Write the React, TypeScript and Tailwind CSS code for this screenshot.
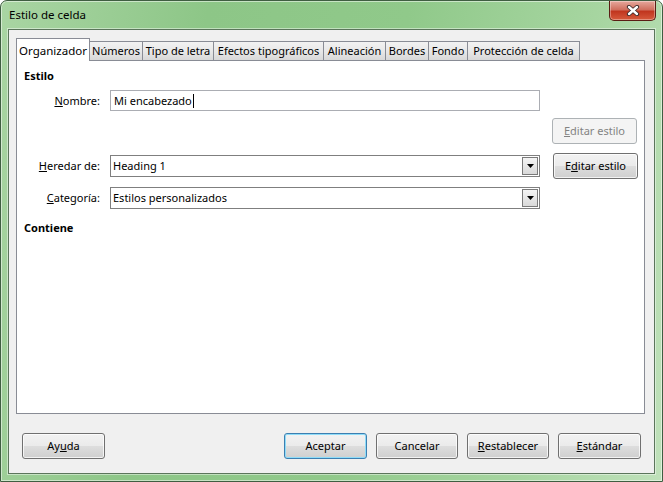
import React from "react";

const tabs = [
  { label: "Organizador", w: "w-[74px]" },
  { label: "Números", w: "w-[53px]" },
  { label: "Tipo de letra", w: "w-[71px]" },
  { label: "Efectos tipográficos", w: "w-[110px]" },
  { label: "Alineación", w: "w-[62px]" },
  { label: "Bordes", w: "w-[43px]" },
  { label: "Fondo", w: "w-[39px]" },
  { label: "Protección de celda", w: "w-[112px]" },
];

const btnFace =
  "bg-[linear-gradient(to_bottom,#f2f2f2_0%,#ebebeb_48%,#dddddd_52%,#cfcfcf_100%)]";

function Button({
  children,
  className = "",
  primary = false,
  disabled = false,
}: {
  children: React.ReactNode;
  className?: string;
  primary?: boolean;
  disabled?: boolean;
}) {
  const skin = disabled
    ? "border-[#adb2b5] bg-[#f4f4f4] text-[#838383]"
    : primary
      ? `border-[#3c7fb1] shadow-[inset_0_0_0_1px_#8fdcf8] ${btnFace}`
      : `border-[#707070] shadow-[inset_0_0_0_1px_rgba(255,255,255,0.75)] ${btnFace}`;
  return (
    <div
      className={`flex items-center justify-center whitespace-nowrap rounded-[3px] border ${skin} ${className}`}
    >
      {children}
    </div>
  );
}

function Combo({ value }: { value: string }) {
  return (
    <div className="ml-[10px] flex h-[22px] w-[430px] border border-[#7f7f7f] bg-white">
      <div className="flex flex-1 items-center pl-[2px]">{value}</div>
      <div className="m-px flex w-[16px] items-center justify-center border border-[#7a7a7a] bg-[linear-gradient(to_bottom,#f4f4f4,#d9d9d9)]">
        <svg width="7" height="4" viewBox="0 0 7 4">
          <path d="M0 0h7L3.5 4z" fill="#000" />
        </svg>
      </div>
    </div>
  );
}

export default function App() {
  return (
    <div className="h-[482px] w-[663px] overflow-hidden bg-white font-['Noto_Sans',sans-serif] text-[11px] leading-[16px] text-black">
      <div className="flex h-full flex-col rounded-t-[7px] border border-[#3f5e41] bg-[linear-gradient(100deg,#a9d5a3_0%,#8dc687_28%,#90c98a_55%,#a6d5a0_80%,#bfe1ba_100%)] px-[7px] pb-[7px] shadow-[inset_0_0_0_1px_rgba(255,255,255,0.5)]">
        {/* title bar */}
        <div className="flex h-[28px] items-start justify-between">
          <span className="mt-[6px] pl-px text-[11.5px]">Estilo de celda</span>
          <div className="-mr-px flex h-[20px] w-[47px] items-center justify-center rounded-b-[5px] border border-t-0 border-[#5a1d14] bg-[linear-gradient(to_bottom,#e6a89d_0%,#d0705f_45%,#c1361f_55%,#d65a3c_100%)] shadow-[inset_0_0_0_1px_rgba(255,255,255,0.35)]">
            <svg width="14" height="11" viewBox="0 0 14 11">
              <path
                d="M3 2l8 7M11 2l-8 7"
                stroke="#3b2a2a"
                strokeWidth="4.2"
                strokeLinecap="round"
              />
              <path
                d="M3 2l8 7M11 2l-8 7"
                stroke="#fff"
                strokeWidth="2.4"
                strokeLinecap="round"
              />
            </svg>
          </div>
        </div>

        {/* client area */}
        <div className="flex flex-1 flex-col border border-[#5b755b] bg-[#f0f0f0] pl-[7px] pt-[8px] shadow-[0_0_0_1px_rgba(255,255,255,0.45)]">
          <div className="flex h-[22px] items-end">
            {tabs.map((t, i) =>
              i === 0 ? (
                <div
                  key={t.label}
                  className={`relative z-10 -mb-px flex h-[23px] items-start justify-center whitespace-nowrap border border-b-0 border-[#898c95] bg-white pt-[4px] text-[11.5px] ${t.w}`}
                >
                  {t.label}
                </div>
              ) : (
                <div
                  key={t.label}
                  className={`flex h-[19px] items-center justify-center whitespace-nowrap border-r border-t border-[#898c95] bg-[linear-gradient(to_bottom,#f2f2f2_0%,#e8e8e8_50%,#d8d8d8_100%)] ${t.w}`}
                >
                  {t.label}
                </div>
              ),
            )}
          </div>

          {/* tab page */}
          <div className="flex h-[354px] w-[629px] flex-col border border-[#898c95] bg-white">
            <div className="mt-[7px] pl-[7px] font-bold">Estilo</div>

            <div className="mt-[6px] flex items-center">
              <div className="w-[83px] text-right">
                <span className="underline">N</span>ombre:
              </div>
              <div className="ml-[10px] flex h-[21px] w-[430px] items-center border border-[#abadb3] bg-white pl-[3px]">
                Mi encabezado
                <span className="ml-px h-[14px] w-px bg-black" />
              </div>
            </div>

            <div className="mt-[7px] flex">
              <Button disabled className="ml-[535px] h-[26px] w-[85px]">
                <span>
                  <span className="underline">E</span>ditar estilo
                </span>
              </Button>
            </div>

            <div className="mt-[9px] flex h-[26px] items-center">
              <div className="w-[83px] text-right">
                <span className="underline">H</span>eredar de:
              </div>
              <Combo value="Heading 1" />
              <Button className="ml-[13px] h-[26px] w-[85px]">
                <span>
                  E<span className="underline">d</span>itar estilo
                </span>
              </Button>
            </div>

            <div className="mt-[8px] flex items-center">
              <div className="w-[83px] text-right">
                <span className="underline">C</span>ategoría:
              </div>
              <Combo value="Estilos personalizados" />
            </div>

            <div className="mt-[11px] pl-[7px] font-bold">Contiene</div>
          </div>

          {/* dialog buttons */}
          <div className="mt-[19px] flex pl-[6px] pr-[13px]">
            <Button className="h-[26px] w-[83px]">
              <span>
                Ay<span className="underline">u</span>da
              </span>
            </Button>
            <div className="ml-auto flex gap-[9px]">
              <Button primary className="h-[26px] w-[83px]">
                Aceptar
              </Button>
              <Button className="h-[26px] w-[82px]">Cancelar</Button>
              <Button className="h-[26px] w-[82px]">
                <span>
                  <span className="underline">R</span>establecer
                </span>
              </Button>
              <Button className="h-[26px] w-[83px]">
                <span>
                  <span className="underline">E</span>stándar
                </span>
              </Button>
            </div>
          </div>
        </div>
      </div>
    </div>
  );
}
